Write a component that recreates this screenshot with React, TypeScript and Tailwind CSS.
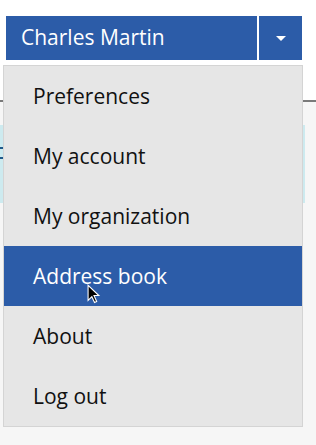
import { useState } from 'react'

const items = ['Preferences', 'My account', 'My organization', 'Address book', 'About', 'Log out']

function Cursor() {
  return (
    <svg width="14" height="21" viewBox="0 0 13 19" className="pointer-events-none absolute left-[87px] top-[284px]">
      <path d="M1 1 L1 15 L4.5 11.5 L7 17 L9 16 L6.5 10.5 L11 10.5 Z" fill="#000" stroke="#fff" strokeWidth="1" />
    </svg>
  )
}

export default function App() {
  const [active] = useState('Address book')

  return (
    <div className="relative h-[445px] w-[316px] overflow-hidden bg-[#f6f6f6] font-['Open_Sans',sans-serif]">
      <div className="h-[102px] border-b-2 border-[#7a7a7a] bg-white pl-[6px] pt-4">
        <div className="flex h-11 gap-[2px]">
          <button className="flex w-[251px] items-center bg-[#2c5ca8] pl-[15px] text-[21px] text-white">
            Charles Martin
          </button>
          <button className="flex w-[43px] items-center justify-center bg-[#2c5ca8]">
            <span className="h-0 w-0 border-x-[5px] border-t-[5px] border-x-transparent border-t-white" />
          </button>
        </div>
      </div>

      <div className="mt-[23px] h-[78px] w-[305px] bg-[#cdeaef]">
        <div className="flex flex-col gap-[8px] pt-[22px]">
          <span className="h-[2px] w-[3px] bg-[#1f5a8a]" />
          <span className="h-[2px] w-[3px] bg-[#1f5a8a]" />
        </div>
      </div>

      <div className="absolute left-[3px] top-[65px] w-[300px] border border-[#d4d4d4] bg-[#e6e6e6]">
        {items.map((item) => (
          <div
            key={item}
            className={
              item === active
                ? 'flex h-[60px] items-center bg-[#2c5ca8] pl-[29px] pt-[2px] text-[21px] text-white'
                : 'flex h-[60px] items-center pl-[29px] pt-[2px] text-[21px] text-[#111]'
            }
          >
            {item}
          </div>
        ))}
      </div>

      <Cursor />
    </div>
  )
}
